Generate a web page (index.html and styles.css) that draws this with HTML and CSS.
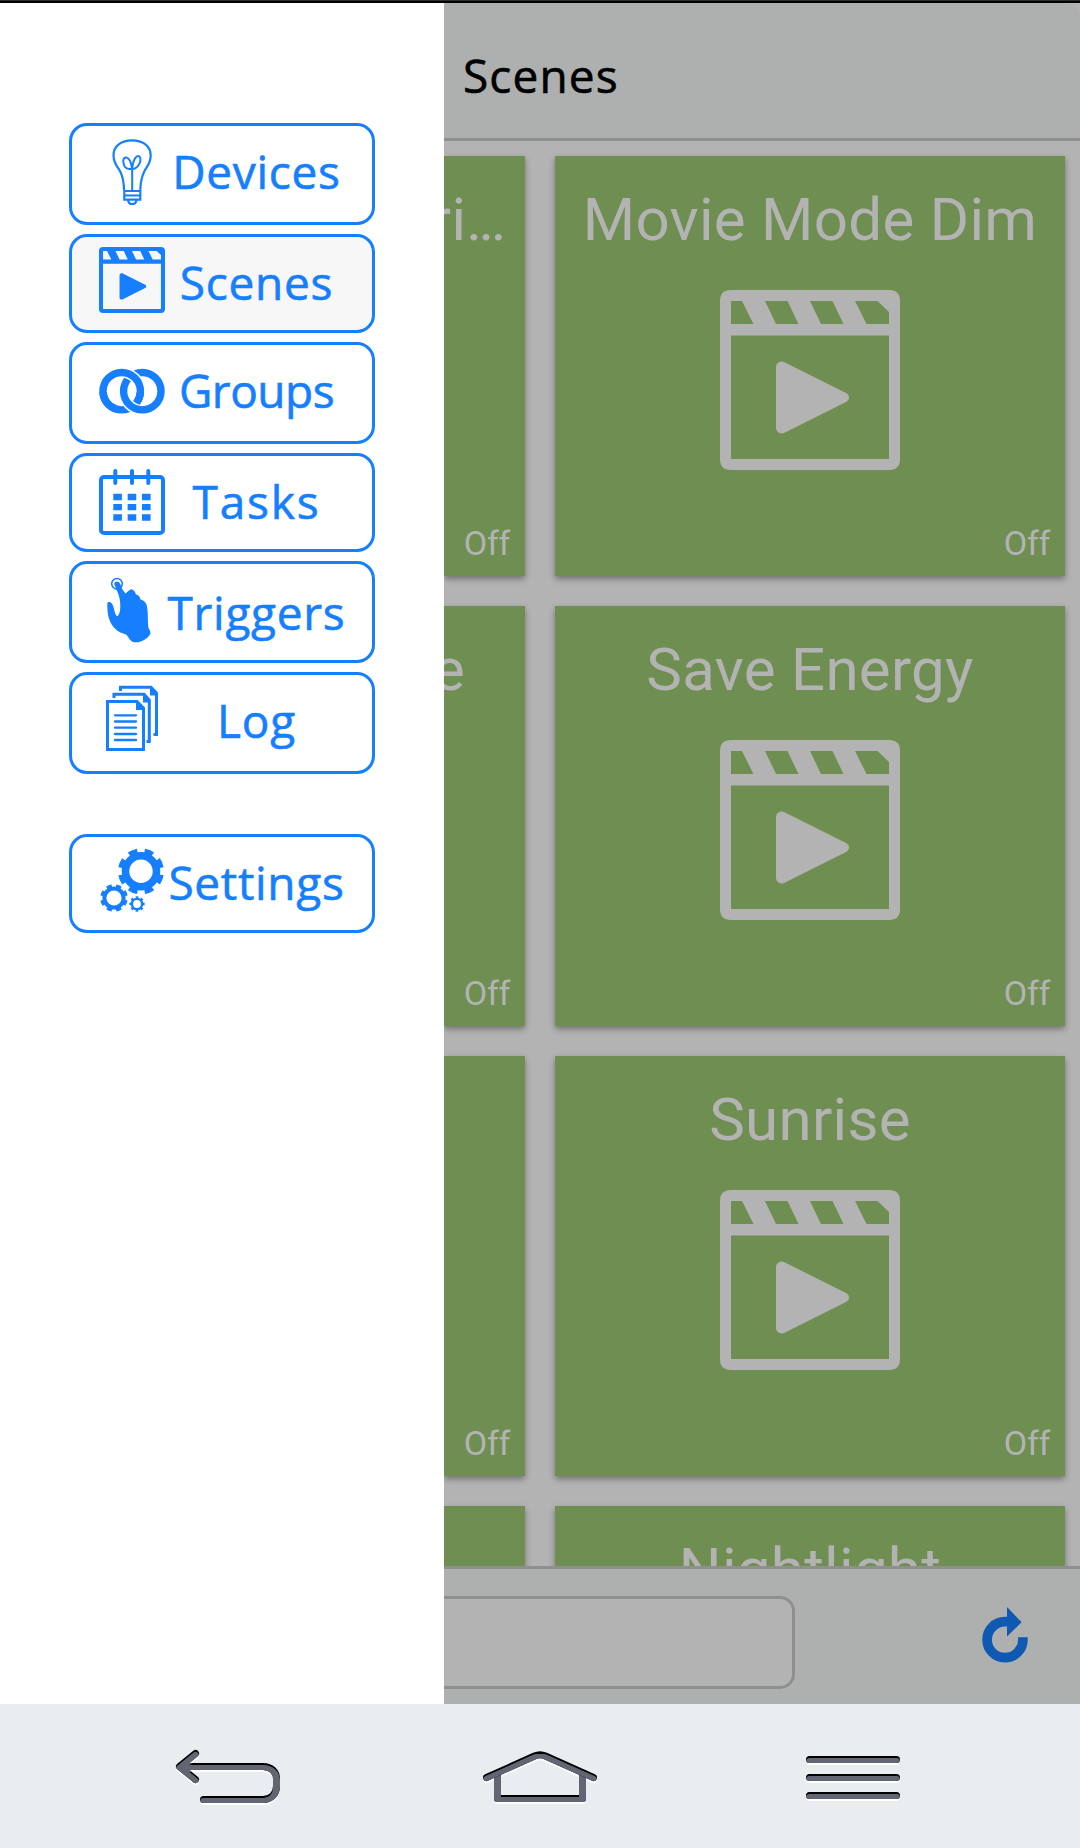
FILE: index.html
```html
<!DOCTYPE html>
<html lang="en">
<head>
<meta charset="utf-8">
<title>Scenes</title>
<link rel="stylesheet" href="styles.css">
</head>
<body>
<svg class="defs" aria-hidden="true">
  <symbol id="clapper" viewBox="0 0 180 180">
    <path fill="currentColor" fill-rule="evenodd" d="M11 0H169Q180 0 180 11V169Q180 180 169 180H11Q0 180 0 169V11Q0 0 11 0ZM11 11V34H33.500L22 11ZM45 11L56 34H78.500L67.500 11ZM90 11L101 34H123.500L112.500 11ZM135 11L146.500 34H169V22L157.500 11ZM11 45.500V169H169V45.500Z"/>
    <path fill="currentColor" d="M56 77.500C56 72.500 61 70 65 72.500L126 103C130 105.500 130 109.500 126 112L65 142.500C61 145 56 142.500 56 137.500Z"/>
  </symbol>
</svg>
<div class="screen">
  <div class="status"></div>
  <div class="app">
    <aside class="drawer">
      <nav class="menu">
        <a class="item"><svg class="icon" viewBox="0 0 66 66" fill="none" stroke="currentColor" stroke-width="2.200">
          <path d="M25 51C25 42 23.500 37 21 32C18 27 14.500 24 14.500 16.500C14.500 6.500 23 1.300 33 1.300S51.700 6.500 51.700 16.500C51.700 24 48.500 27 45.500 32C43 37 41.500 42 41.300 51"/>
          <path stroke-width="2" d="M33.200 51V31C32 21 29 18 26.500 18.500C23 19.500 23.500 29.500 30 30H34C40 29 43 21 40.500 17.500C37.500 15.500 33.500 21 33.200 31"/>
          <path d="M25.300 52H41.300V56.500H25.300ZM25.300 56.500H41.300V60.700H25.300ZM29 61C30 66.500 36.500 66.500 37.500 61"/></svg><span class="label">Devices</span></a>
        <a class="item short active"><svg class="icon raised"><use href="#clapper"/></svg><span class="label">Scenes</span></a>
        <a class="item"><svg class="icon" viewBox="0 0 66 66" fill="none">
          <clipPath id="lower"><rect y="34" width="66" height="32"/></clipPath>
          <circle cx="43.300" cy="33.200" r="18.700" stroke="currentColor" stroke-width="7.400"/>
          <circle cx="22.700" cy="33.200" r="18.700" stroke="#fff" stroke-width="10.600"/>
          <circle cx="22.700" cy="33.200" r="18.700" stroke="currentColor" stroke-width="7.400"/>
          <g clip-path="url(#lower)"><circle cx="43.300" cy="33.200" r="18.700" stroke="#fff" stroke-width="10.600"/><circle cx="22.700" cy="33.200" r="18.700" stroke="currentColor" stroke-width="7.400" stroke-dasharray="12 23 30 60"/><circle cx="43.300" cy="33.200" r="18.700" stroke="currentColor" stroke-width="7.400"/></g></svg><span class="label tight">Groups</span></a>
        <a class="item short"><svg class="icon" viewBox="0 0 66 66" fill="none" stroke="currentColor" stroke-width="4">
          <rect x="2" y="8" width="62" height="56" rx="3"/><path stroke-linecap="round" d="M16.300 2V14M33 2V14M49.300 2V14"/>
          <path stroke-width="6.300" stroke-dasharray="8.600 5.750" d="M14.300 28H52M14.300 38.100H52M14.300 48.500H52"/></svg><span class="label wide">Tasks</span></a>
        <a class="item"><svg class="icon" viewBox="0 0 66 66" fill="currentColor">
          <circle cx="18" cy="6.800" r="5.300" fill="none" stroke="currentColor" stroke-width="1.600"/>
          <path d="M15.200 7C15.200 3.500 20.500 3.500 21.200 7L23.500 12.500L26.500 16.500L30.500 13Q33.500 11 36 15L37 17.500Q40.500 18 41.500 22.500Q46.500 23.500 48 29C49.300 36 48.500 43 49.300 50C50 53 52 54 51.300 57C48 63 40 66.500 34 65C30 63 30 60 27 57.500C19 55.500 13 50 10.500 43C8.500 38 8.300 32 8.300 26.500C9 24 12.500 25 13.500 27.500C15.500 31 15.500 39 18.700 39.300C21.700 36 21.700 28 20.700 22C19.500 16 17 12 15.200 7Z"/></svg><span class="label dropped">Triggers</span></a>
        <a class="item"><svg class="icon raised" viewBox="0 0 66 66" fill="none" stroke="currentColor" stroke-width="3">
          <path d="M8.500 16.500H38L44.500 23V64.500H8.500Z"/><path d="M15 13V9.200H45L50.300 15V56.500H47.500M21.500 6V2.300H52L57.500 8V49.500H54.500"/>
          <path fill="currentColor" stroke="none" d="M37 15V25H46ZM44 8V17.500H52ZM51 1V10.500H59Z"/>
          <path stroke-width="2.300" stroke-linecap="round" d="M16 30.300H37M16 36.500H37M16 42.700H37M16 49H37M16 55H37"/></svg><span class="label">Log</span></a>
        <a class="item short settings"><svg class="icon raised" viewBox="0 0 66 66" fill="none" stroke="currentColor">
          <g transform="translate(42 24.300)"><circle r="15.500" stroke-width="7.600"/><circle r="20.300" stroke-width="5.400" pathLength="16" stroke-dasharray="1.100 .9" transform="rotate(10)"/></g>
          <g transform="translate(15 51)"><circle r="9.600" stroke-width="4"/><circle r="12" stroke-width="3.600" pathLength="16" stroke-dasharray="1.100 .9" transform="rotate(10)"/></g>
          <g transform="translate(38 57)"><circle r="5.100" stroke-width="2.400"/><circle r="6.600" stroke-width="2.200" pathLength="16" stroke-dasharray="1 1" transform="rotate(-11)"/></g></svg><span class="label">Settings</span></a>
      </nav>
    </aside>
    <div class="content">
      <header class="header"><h1 class="title">Scenes</h1></header>
      <main class="grid">
        <section class="card"><h2 class="name cut">ri<span class="dots">...</span></h2><p class="state">Off</p></section>
        <section class="card"><h2 class="name">Movie Mode Dim</h2><svg class="scene"><use href="#clapper"/></svg><p class="state">Off</p></section>
        <section class="card"><h2 class="name cut cut-more">e</h2><p class="state">Off</p></section>
        <section class="card"><h2 class="name">Save Energy</h2><svg class="scene"><use href="#clapper"/></svg><p class="state">Off</p></section>
        <section class="card"><p class="state">Off</p></section>
        <section class="card"><h2 class="name">Sunrise</h2><svg class="scene"><use href="#clapper"/></svg><p class="state">Off</p></section>
        <section class="card"></section>
        <section class="card"><h2 class="name">Nightlight</h2></section>
      </main>
      <footer class="footer">
        <div class="field"></div>
        <svg class="reload" viewBox="0 0 48 56"><path d="M41.900 30.300V32.700A17.900 18 0 1 1 24 14.700H28" fill="none" stroke="currentColor" stroke-width="9.700"/><path d="M26 0L40.600 15.300L26 29.500Z" fill="currentColor"/></svg>
      </footer>
    </div>
  </div>
  <div class="keys">
    <svg class="key" viewBox="0 0 120 80">
      <defs><path id="turn" d="M15 30.500H91C99.500 30.500 104.500 36 104.500 43V50C104.500 58 99 63.500 91 63.500H31.500M23.500 17.500L7.500 30.500L23.500 43.500"/>
      <mask id="turn-mask"><use href="#turn" stroke="#fff"/></mask></defs>
      <use href="#turn" class="glow" y="2"/><use href="#turn" class="edge"/><g mask="url(#turn-mask)"><use href="#turn" class="fill" y="2"/></g>
    </svg>
    <svg class="key home" viewBox="0 0 120 80">
      <defs><path id="walls" d="M17.500 39V62.500H102.500V39"/><path id="roof" d="M6.500 41.500L54.500 20Q60 17.500 65.500 20L113.500 41.500"/>
      <mask id="roof-mask"><use href="#roof" stroke="#fff"/></mask><mask id="walls-mask"><use href="#walls" stroke="#fff"/></mask></defs>
      <use href="#walls" class="glow" y="2"/><use href="#roof" class="glow" y="2"/>
      <use href="#walls" class="edge"/><g mask="url(#walls-mask)"><use href="#walls" class="fill" y="2"/></g>
      <use href="#roof" class="edge"/><g mask="url(#roof-mask)"><use href="#roof" class="fill" y="2"/></g>
    </svg>
    <svg class="key" viewBox="0 0 120 80">
      <defs><path id="bars" d="M16.500 23.500H103.500M16.500 41.500H103.500M16.500 59.500H103.500"/>
      <mask id="bars-mask" maskUnits="userSpaceOnUse" x="0" y="0" width="120" height="80"><use href="#bars" stroke="#fff"/></mask></defs>
      <use href="#bars" class="glow" y="2"/><use href="#bars" class="edge"/><g mask="url(#bars-mask)"><use href="#bars" class="fill" y="2"/></g>
    </svg>
  </div>
</div>
</body>
</html>
```

FILE: styles.css
```css
* { box-sizing: border-box; margin: 0; padding: 0; }
body { width: 1080px; height: 1848px; overflow: hidden; font-family: Roboto, sans-serif; }
.defs { display: none; }
.screen { display: flex; flex-direction: column; height: 1848px; }
.status { height: 3px; background: #000; border-top: 1px solid #2a2e2b; }
.app { flex: 1; min-height: 0; display: flex; background: #b3b3b3; }
.content { flex: 1; min-width: 0; display: flex; flex-direction: column; }

.header { flex: none; height: 138px; padding-left: 19px; background: #adb0ae; border-bottom: 3px solid #8f8f8f; border-top-right-radius: 15px; }
.title { font: 400 46px/144px "Open Sans", sans-serif; letter-spacing: 1.1px; -webkit-text-stroke: .6px currentColor; color: #000; }

.grid { flex: 1; min-height: 0; overflow: hidden; display: grid; grid-template-columns: 81px 510px; grid-auto-rows: 420px; gap: 30px; padding: 15px 0; }
.card { display: flex; flex-direction: column; align-items: center; background: #6f8f52; color: #b3b3b3; box-shadow: 0 3px 6px rgba(0, 0, 0, .36); }
.name { height: 134px; font-weight: 400; font-size: 60px; line-height: 127px; letter-spacing: .3px; white-space: nowrap; }
.cut { display: flex; justify-content: flex-end; align-self: stretch; overflow: hidden; padding-right: 22px; }
.cut-more { padding-right: 60px; }
.dots { letter-spacing: -3.6px; }
.scene { width: 180px; height: 180px; }
.state { align-self: flex-end; margin: auto 15px 3px 0; font-size: 34px; line-height: 60px; letter-spacing: -.3px; }

.footer { flex: none; height: 138px; display: flex; justify-content: space-between; padding: 27px 51px 0 0; background: #adb0ae; border-top: 3px solid #8f8f8f; }
.field { width: 351px; height: 93px; border: 3px solid #8f8f8f; border-left: 0; border-radius: 0 15px 15px 0; background: #b3b3b3; }
.reload { width: 48px; height: 56px; margin-top: 11px; color: #0f59b2; }

.drawer { flex: none; width: 444px; padding: 120px 69px 0; background: #fff; }
.menu { display: flex; flex-direction: column; gap: 9px; }
.item { display: flex; align-items: flex-start; height: 102px; padding-left: 27px; border: 3px solid #157fff; border-radius: 18px; color: #157fff; }
.short { height: 99px; }
.active { background: #f7f7f7; }
.settings { margin-top: 51px; }
.icon { flex: none; width: 66px; height: 66px; margin-top: 13px; }
.raised { margin-top: 10px; }
.label { width: 183px; font: 400 46px/90px "Open Sans", sans-serif; letter-spacing: .7px; -webkit-text-stroke: .6px currentColor; text-align: center; white-space: nowrap; }
.tight { letter-spacing: -.5px; }
.wide { letter-spacing: 1.8px; }
.dropped { margin-top: 3px; }

.keys { flex: none; height: 144px; display: flex; justify-content: space-between; padding: 32px 167px 0 172px; background: #e9edf0; }
.key { width: 120px; height: 80px; fill: none; stroke-width: 7px; stroke-linecap: round; stroke-linejoin: round; }
.home { margin-right: 5px; }
.glow { stroke: #fff; }
.edge { stroke: #000; }
.fill { stroke: #626672; }
```
